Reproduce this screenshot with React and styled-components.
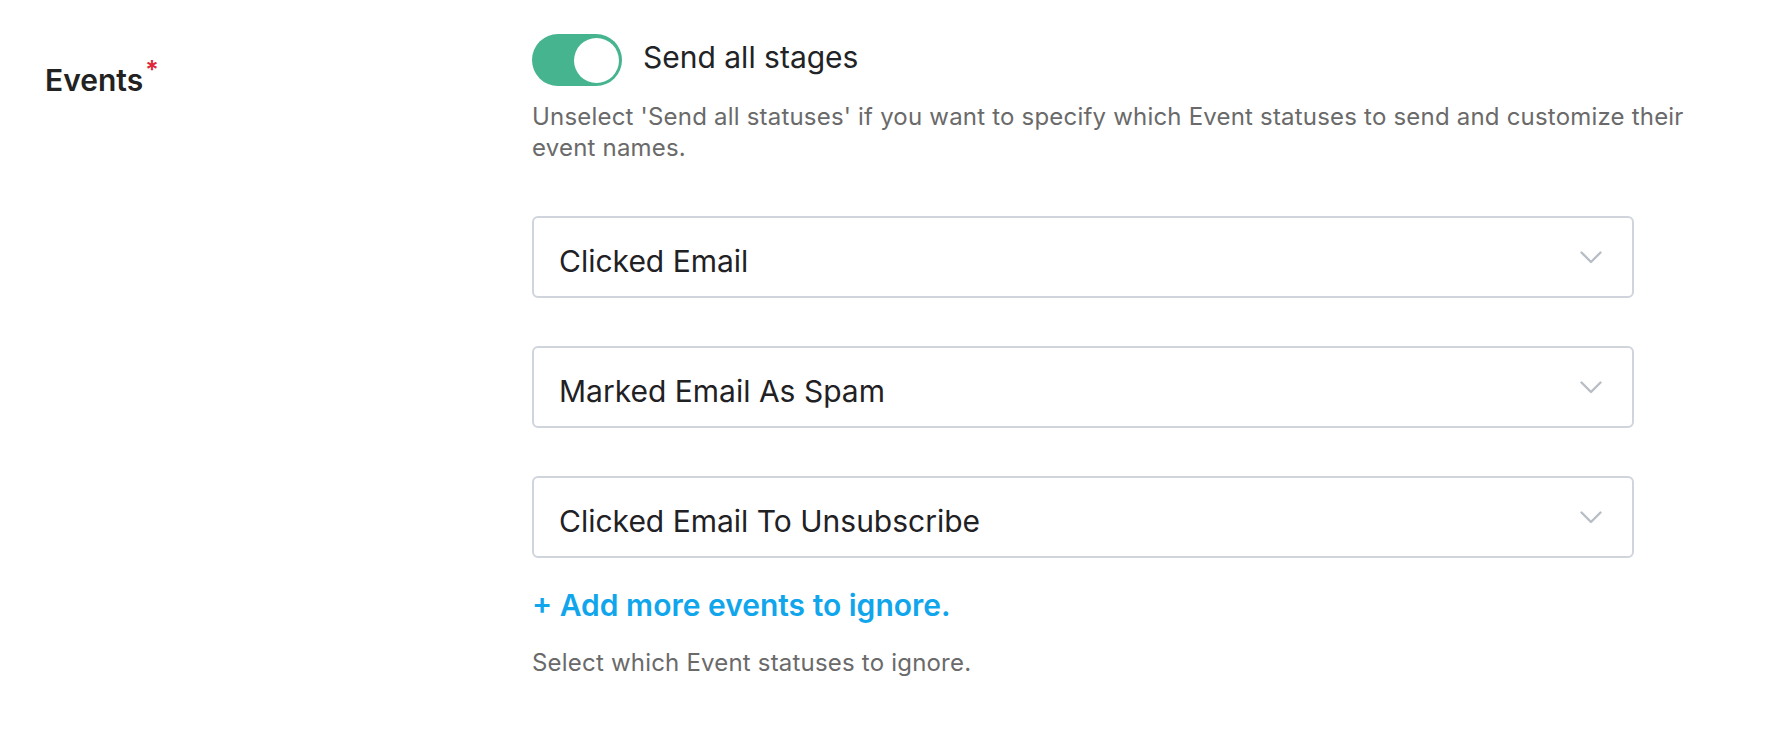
import styled, { createGlobalStyle } from 'styled-components'

const GlobalStyle = createGlobalStyle`
  body {
    margin: 0;
    background: #ffffff;
    font-family: Inter, "Open Sans", sans-serif;
    color: #212326;
  }
`

const Page = styled.div`
  display: grid;
  grid-template-columns: 532px 1190px;
  padding-top: 34px;
`

const Label = styled.div`
  padding: 24px 0 0 45px;
  font-size: 30px;
  line-height: 36px;
  font-weight: 600;
  color: #222222;
`

const Required = styled.span`
  color: #e0263a;
  font-size: 25px;
  line-height: 1;
  margin-left: 2px;
  vertical-align: 12px;
`

const Content = styled.div`
  display: flex;
  flex-direction: column;
`

const ToggleRow = styled.label`
  display: flex;
  align-items: center;
  gap: 21px;
  font-size: 30px;
  line-height: 36px;
`

const ToggleText = styled.span`
  margin-bottom: 7px;
`

const Track = styled.span`
  width: 90px;
  height: 52px;
  border-radius: 26px;
  background: ${p => (p.$on ? '#45b48f' : '#c9ced6')};
  display: flex;
  align-items: center;
  justify-content: ${p => (p.$on ? 'flex-end' : 'flex-start')};
  padding: 0 3px;
  box-sizing: border-box;
`

const Knob = styled.span`
  width: 45px;
  height: 45px;
  border-radius: 50%;
  background: #ffffff;
`

const Hint = styled.p`
  margin: ${p => p.$top || '0'} 0 0;
  font-size: 24px;
  line-height: 31px;
  letter-spacing: 0.2px;
  color: #6a6a6a;
  max-width: 1185px;
`

const SelectList = styled.div`
  display: flex;
  flex-direction: column;
  gap: 48px;
  margin-top: 53px;
`

const Select = styled.div`
  width: 1102px;
  height: 82px;
  box-sizing: border-box;
  border: 2px solid #d0d4dc;
  border-radius: 6px;
  display: flex;
  align-items: center;
  justify-content: space-between;
  padding: 7px 30px 0 25px;
  font-size: 30px;
  color: #1f2124;
`

const AddLink = styled.a`
  margin-top: 29px;
  font-size: 30px;
  line-height: 36px;
  font-weight: 600;
  color: #11a6ec;
  text-decoration: none;
  cursor: pointer;
`

const Chevron = () => (
  <svg width="22" height="13" viewBox="0 0 22 13" fill="none" style={{ marginTop: -7 }}>
    <path d="M1.5 1.5 L11 11 L20.5 1.5" stroke="#b9bec6" strokeWidth="2.4" strokeLinecap="round" strokeLinejoin="round" />
  </svg>
)

const events = ['Clicked Email', 'Marked Email As Spam', 'Clicked Email To Unsubscribe']

export default function App() {
  return (
    <>
      <GlobalStyle />
      <Page>
        <Label>
          Events<Required>*</Required>
        </Label>
        <Content>
          <ToggleRow>
            <Track $on>
              <Knob />
            </Track>
            <ToggleText>Send all stages</ToggleText>
          </ToggleRow>
          <Hint $top="15px">
            Unselect 'Send all statuses' if you want to specify which Event statuses to send and customize their event names.
          </Hint>
          <SelectList>
            {events.map(name => (
              <Select key={name}>
                {name}
                <Chevron />
              </Select>
            ))}
          </SelectList>
          <AddLink>+ Add more events to ignore.</AddLink>
          <Hint $top="24px">Select which Event statuses to ignore.</Hint>
        </Content>
      </Page>
    </>
  )
}
